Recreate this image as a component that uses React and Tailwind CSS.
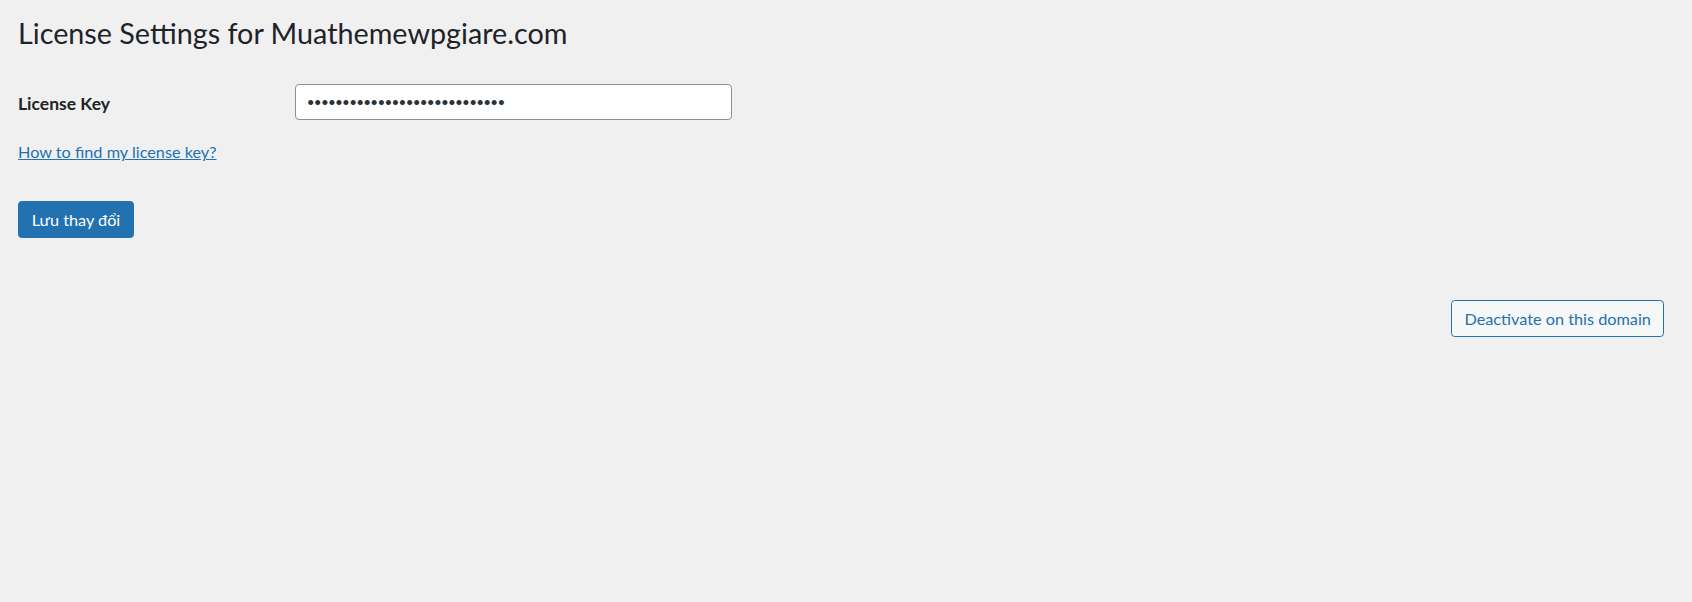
export default function App() {
  return (
    <div className="min-h-screen bg-[#f0f0f1] pl-[18px] pr-[27.7px] pt-[14.5px] font-['Lato',sans-serif] text-[#1d2327]">
      <h1 className="text-[28.75px] leading-[1.3] font-normal">License Settings for Muathemewpgiare.com</h1>

      <div className="mt-[32.4px] flex items-start">
        <label className="w-[277.3px] mt-[9.1px] text-[17.5px] leading-[21px] font-bold">License Key</label>
        <input
          type="password"
          readOnly
          value="abcdefghijklmnopqrstuvwxyz12"
          className="w-[436.4px] h-[36px] rounded-[4px] border border-[#8c8f94] bg-white pl-[10.5px] text-[13.5px] tracking-[-0.77px] text-[#2c3338] outline-none"
        />
      </div>

      <div className="mt-[22px] leading-[19.5px]">
        <a href="#" className="text-[16.25px] leading-[19.5px] text-[#2271b1] underline">How to find my license key?</a>
      </div>

      <div className="mt-[39.2px]">
        <button className="flex h-[37.5px] w-[116px] items-center justify-center rounded-[3.75px] border border-[#2271b1] bg-[#2271b1] text-[16.25px] text-white">
          Lưu thay đổi
        </button>
      </div>

      <div className="mt-[62px] flex justify-end">
        <button className="flex h-[37px] w-[213.3px] items-center justify-center rounded-[3.75px] border border-[#2271b1] bg-[#f6f7f7] text-[16.25px] text-[#2271b1]">
          Deactivate on this domain
        </button>
      </div>
    </div>
  );
}
